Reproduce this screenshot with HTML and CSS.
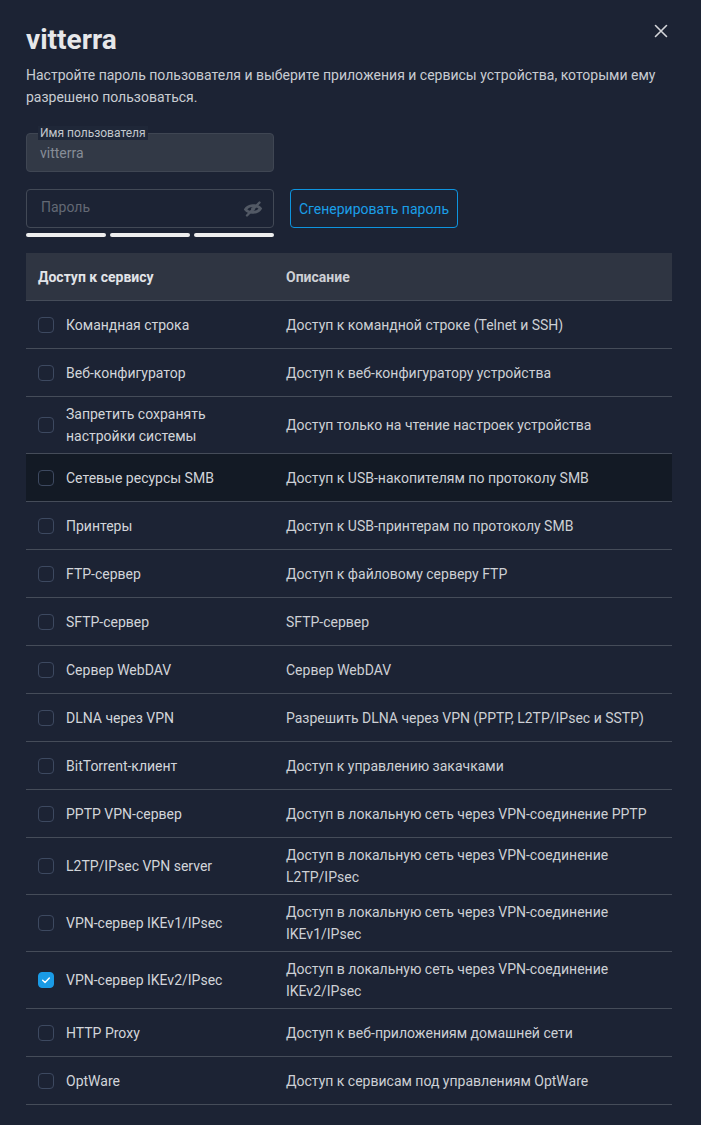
FILE: index.html
```html
<!DOCTYPE html>
<html lang="ru">
<head>
<meta charset="utf-8">
<title>vitterra</title>
<link rel="stylesheet" href="styles.css">
</head>
<body>
<div class="dialog">
  <div class="head-row">
    <h1 class="title">vitterra</h1>
    <button class="close" aria-label="Закрыть">
      <svg width="14" height="14" viewBox="0 0 14 14"><path d="M1.5 1.5 L12.5 12.5 M12.5 1.5 L1.5 12.5" stroke="#d4d6da" stroke-width="1.6" stroke-linecap="round"/></svg>
    </button>
  </div>
  <p class="desc">Настройте пароль пользователя и выберите приложения и сервисы устройства, которыми ему разрешено пользоваться.</p>

  <div class="field field-filled">
    <span class="field-label">Имя пользователя</span>
    <span class="field-value">vitterra</span>
  </div>

  <div class="pw-row">
    <div class="pw-col">
      <div class="field field-pw">
        <span class="placeholder">Пароль</span>
        <svg class="eye" width="20" height="20" viewBox="0 0 20 20">
          <path d="M2.5 10.5 C5 6, 14 5, 17.5 9.5 C15 14, 6 15, 2.5 10.5 Z" fill="none" stroke="#525965" stroke-width="2.8"/>
          <circle cx="10" cy="10" r="2" fill="#525965"/>
          <path d="M4 16.5 L16.5 3.5" stroke="#525965" stroke-width="2.4" stroke-linecap="round"/>
        </svg>
      </div>
      <div class="strength"><span></span><span></span><span></span></div>
    </div>
    <button class="gen">Сгенерировать пароль</button>
  </div>

  <div class="table">
    <div class="row row-head"><div class="c1">Доступ к сервису</div><div class="c2">Описание</div></div>
    <div class="row"><div class="c1"><span class="cb"></span><span>Командная строка</span></div><div class="c2">Доступ к командной строке (Telnet и SSH)</div></div>
    <div class="row"><div class="c1"><span class="cb"></span><span>Веб-конфигуратор</span></div><div class="c2">Доступ к веб-конфигуратору устройства</div></div>
    <div class="row"><div class="c1"><span class="cb"></span><span>Запретить сохранять настройки системы</span></div><div class="c2">Доступ только на чтение настроек устройства</div></div>
    <div class="row row-hover"><div class="c1"><span class="cb"></span><span>Сетевые ресурсы SMB</span></div><div class="c2">Доступ к USB-накопителям по протоколу SMB</div></div>
    <div class="row"><div class="c1"><span class="cb"></span><span>Принтеры</span></div><div class="c2">Доступ к USB-принтерам по протоколу SMB</div></div>
    <div class="row"><div class="c1"><span class="cb"></span><span>FTP-сервер</span></div><div class="c2">Доступ к файловому серверу FTP</div></div>
    <div class="row"><div class="c1"><span class="cb"></span><span>SFTP-сервер</span></div><div class="c2">SFTP-сервер</div></div>
    <div class="row"><div class="c1"><span class="cb"></span><span>Сервер WebDAV</span></div><div class="c2">Сервер WebDAV</div></div>
    <div class="row"><div class="c1"><span class="cb"></span><span>DLNA через VPN</span></div><div class="c2">Разрешить DLNA через VPN (PPTP, L2TP/IPsec и SSTP)</div></div>
    <div class="row"><div class="c1"><span class="cb"></span><span>BitTorrent-клиент</span></div><div class="c2">Доступ к управлению закачками</div></div>
    <div class="row"><div class="c1"><span class="cb"></span><span>PPTP VPN-сервер</span></div><div class="c2">Доступ в локальную сеть через VPN-соединение PPTP</div></div>
    <div class="row"><div class="c1"><span class="cb"></span><span>L2TP/IPsec VPN server</span></div><div class="c2">Доступ в локальную сеть через VPN-соединение L2TP/IPsec</div></div>
    <div class="row"><div class="c1"><span class="cb"></span><span>VPN-сервер IKEv1/IPsec</span></div><div class="c2">Доступ в локальную сеть через VPN-соединение IKEv1/IPsec</div></div>
    <div class="row"><div class="c1"><span class="cb cb-on"><svg width="16" height="16" viewBox="0 0 16 16"><path d="M4.2 8.3 L6.9 10.9 L11.8 5.6" fill="none" stroke="#ffffff" stroke-width="1.6" stroke-linecap="round" stroke-linejoin="round"/></svg></span><span>VPN-сервер IKEv2/IPsec</span></div><div class="c2">Доступ в локальную сеть через VPN-соединение IKEv2/IPsec</div></div>
    <div class="row"><div class="c1"><span class="cb"></span><span>HTTP Proxy</span></div><div class="c2">Доступ к веб-приложениям домашней сети</div></div>
    <div class="row"><div class="c1"><span class="cb"></span><span>OptWare</span></div><div class="c2">Доступ к сервисам под управлениям OptWare</div></div>
  </div>
</div>
</body>
</html>
```

FILE: styles.css
```css
* { box-sizing: border-box; }

html, body {
  margin: 0;
  padding: 0;
  background: #1c2334;
}

body {
  font-family: Roboto, "Noto Sans", "Liberation Sans", sans-serif;
  font-size: 14px;
  color: #d2d5da;
}

.dialog {
  padding: 24px 29px 0 26px;
}

.head-row {
  display: flex;
  justify-content: space-between;
  align-items: flex-start;
}

.title {
  margin: 0;
  font-size: 28px;
  line-height: 32px;
  font-weight: 700;
  color: #e6e7ea;
}

.close {
  width: 24px;
  height: 24px;
  margin: -5px -1px 0 0;
  padding: 0;
  border: 0;
  background: transparent;
  display: flex;
  align-items: center;
  justify-content: center;
}

.desc {
  margin: 8px 0 0;
  line-height: 22px;
  color: #c8ccd2;
}

.field {
  position: relative;
  width: 248px;
  height: 39px;
  border: 1px solid #424956;
  border-radius: 4px;
  display: flex;
  align-items: center;
  padding: 0 13px;
}

.field-filled {
  margin-top: 25px;
  background: #323946;
  border-color: #3f4653;
}

.field-label {
  position: absolute;
  left: 11px;
  top: -8px;
  padding: 0 2px;
  font-size: 12px;
  line-height: 14px;
  color: #c3c7cd;
  background: #1f2738;
}

.field-value {
  color: #878d97;
}

.pw-row {
  margin-top: 17px;
  display: flex;
  align-items: flex-start;
  gap: 16px;
}

.field-pw {
  justify-content: space-between;
  padding: 0 10px 3px 14px;
}

.placeholder {
  color: #636974;
}

.eye {
  display: block;
  margin-top: 3px;
}

.strength {
  margin-top: 5px;
  width: 248px;
  display: flex;
  gap: 4px;
}

.strength span {
  flex: 1;
  height: 4px;
  border-radius: 2px;
  background: #eeeeee;
}

.gen {
  width: 168px;
  height: 39px;
  border: 1px solid #0e94df;
  border-radius: 4px;
  background: transparent;
  color: #1a9fe8;
  font-family: inherit;
  font-size: 14px;
  padding: 0;
}

.table {
  margin-top: 16px;
  width: 646px;
}

.row {
  display: flex;
  align-items: center;
  min-height: 48px;
  border-bottom: 1px solid #454c59;
  padding: 6px 0;
  line-height: 22px;
}

.row-head {
  background: #2f3542;
  font-weight: 700;
  color: #e2e4e8;
}

.row-hover {
  background: #131a25;
}

.c1 {
  width: 248px;
  flex: none;
  padding: 0 12px;
  display: flex;
  align-items: center;
  gap: 12px;
}

.c2 {
  flex: 1;
  padding: 0 12px;
  color: #cdd0d5;
}

.cb {
  flex: none;
  width: 16px;
  height: 16px;
  border: 1px solid #3d4960;
  border-radius: 4px;
  display: flex;
  align-items: center;
  justify-content: center;
}

.cb-on {
  background: #1a9be6;
  border-color: #1a9be6;
}

.cb svg {
  display: block;
}
```
